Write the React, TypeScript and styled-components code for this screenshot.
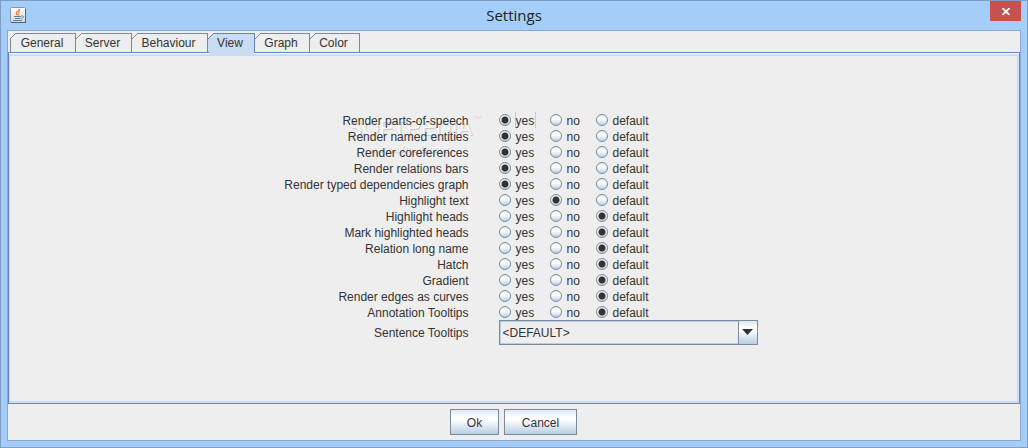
import React, { useState } from "react";
import styled, { createGlobalStyle, css } from "styled-components";

const metal = {
  frame: "#a4cdf9",
  frameLine: "#7f9dc3",
  clientLine: "#8ba9d0",
  panel: "#eeeeee",
  text: "#333333",
  shadow: "#7a8a99",
  focus: "#6382bf",
  selected: "#c8ddf2",
  bevel: "#b8cfe5",
};

const GlobalStyle = createGlobalStyle`
  *, *::before, *::after { box-sizing: border-box; }
  body {
    margin: 0;
    background: ${metal.frame};
    color: ${metal.text};
    font: 12px/16px "Liberation Sans", Arial, sans-serif;
  }
  button, select, input { font: inherit; color: inherit; margin: 0; }
`;

const steel = css`
  background: linear-gradient(#dde8f3 0%, #ffffff 30%, #ffffff 40%, #b8cfe5 100%);
`;

const Window = styled.div`
  min-height: 100vh;
  display: flex;
  flex-direction: column;
  padding: 0 6px 6px;
  border: 1px solid ${metal.frameLine};
  background: ${metal.frame};
`;

const TitleBar = styled.header`
  height: 29px;
  display: grid;
  grid-template-columns: 31px 1fr 31px;
  align-items: start;
`;

const AppIcon = styled.svg`
  width: 16px;
  height: 16px;
  margin: 6px 0 0 3px;
`;

const Title = styled.h1`
  margin: 0;
  text-align: center;
  font: 15px/29px "Open Sans", "Noto Sans", sans-serif;
  color: #1e1e1e;
`;

const CloseButton = styled.button`
  width: 31px;
  height: 20px;
  display: grid;
  place-items: center;
  padding: 0;
  border: 0;
  background: #c75050;
`;

const Client = styled.main`
  flex: 1;
  display: flex;
  flex-direction: column;
  padding-top: 2px;
  border: 1px solid ${metal.clientLine};
  background: ${metal.panel};
`;

const TabList = styled.div`
  display: flex;
  padding-left: 2px;
`;

const Tab = styled.button<{ $active: boolean; $width: number }>`
  position: relative;
  width: ${(p) => p.$width}px;
  height: 19px;
  padding: 0 2px 0 0;
  border: 1px solid ${(p) => (p.$active ? metal.focus : metal.shadow)};
  border-width: 1px 1px 0 0;
  line-height: 18px;
  text-align: center;
  background: ${(p) => (p.$active ? metal.selected : metal.panel)};

  &:first-child {
    border-left-width: 1px;
  }

  &::before {
    content: "";
    position: absolute;
    top: -1px;
    left: 0;
    width: 6px;
    height: 6px;
    background: linear-gradient(
      135deg,
      ${metal.panel} 42%,
      ${(p) => (p.$active ? metal.focus : metal.shadow)} 43%,
      ${(p) => (p.$active ? metal.focus : metal.shadow)} 56%,
      transparent 57%
    );
  }

  &:first-child::before {
    left: -1px;
  }

  ${(p) =>
    p.$active &&
    css`
      &::after {
        content: "";
        position: absolute;
        top: 100%;
        left: 1px;
        right: 0;
        height: 3px;
        background: ${metal.selected};
      }
    `}
`;

const TabPanel = styled.section`
  flex: 1;
  display: flex;
  padding-top: 1px;
  border: 1px solid ${metal.shadow};
  border-top-color: ${metal.focus};
  border-left-color: ${metal.focus};
  background: #ffffff;
`;

const PanelInset = styled.div`
  flex: 1;
  display: flex;
  align-items: center;
  justify-content: center;
  padding-bottom: 1px;
  border: 2px solid ${metal.selected};
  border-left-width: 1px;
  background: ${metal.panel};
`;

const Form = styled.form`
  position: relative;
  isolation: isolate;
  display: grid;
  grid-template-columns: 199px 259px;
  column-gap: 30px;
`;

const Option = styled.div`
  display: contents;
`;

const Caption = styled.span`
  text-align: right;
  line-height: 18px;
  height: 16px;
  white-space: nowrap;
`;

const SelectCaption = styled.label`
  text-align: right;
  line-height: 26px;
  height: 25px;
`;

const Choices = styled.div`
  display: flex;
  height: 16px;
  align-items: center;
`;

const Choice = styled.label`
  display: flex;
  align-items: center;
  gap: 5px;
  line-height: 18px;
  height: 16px;

  &:nth-child(1) { width: 51px; }
  &:nth-child(2) { width: 46px; }
`;

const Radio = styled.input.attrs({ type: "radio" })`
  appearance: none;
  width: 12px;
  height: 12px;
  border: 1px solid ${metal.shadow};
  border-radius: 50%;
  ${steel}
  outline: none;

  &:checked {
    background:
      radial-gradient(circle at center, #333333 0 3px, transparent 4px),
      linear-gradient(#dde8f3 0%, #ffffff 30%, #ffffff 40%, #b8cfe5 100%);
  }
`;

const ChoiceText = styled.span<{ $focused: boolean }>`
  height: 16px;
  padding-right: 1px;
  box-shadow: ${(p) =>
    p.$focused ? `-1px 0 ${metal.bevel}, 1px 0 ${metal.bevel}` : "none"};
`;

const Combo = styled.div`
  display: grid;
  grid-template-columns: 1fr 19px;
  height: 25px;
  border: 1px solid ${metal.shadow};
`;

const ComboSelect = styled.select`
  grid-area: 1 / 1 / 2 / 3;
  min-width: 0;
  appearance: none;
  padding: 1px 20px 0 2px;
  border: 1px solid ${metal.bevel};
  border-radius: 0;
  background: ${metal.panel};
  outline: none;
`;

const ComboArrow = styled.span`
  grid-area: 1 / 2 / 2 / 3;
  z-index: 1;
  display: grid;
  place-items: center;
  border-left: 1px solid ${metal.shadow};
  pointer-events: none;
  ${steel}
`;

const Actions = styled.footer`
  display: flex;
  justify-content: center;
  gap: 5px;
  padding: 5px 6px 5px 5px;
`;

const ActionButton = styled.button<{ $width: number }>`
  width: ${(p) => p.$width}px;
  height: 26px;
  padding: 1px 0 0;
  border: 1px solid ${metal.shadow};
  ${steel}
`;

const Watermark = styled.div`
  position: absolute;
  z-index: -1;
  top: 4px;
  left: 78px;
  color: #f8f8f8;
  text-align: center;
  text-shadow: 1px 1px 1px #c4c4c4;
  pointer-events: none;
`;

const WatermarkName = styled.div`
  font: 22px/24px "Liberation Sans", sans-serif;

  sup {
    position: absolute;
    top: -4px;
    font: 9px/10px "Liberation Sans", sans-serif;
  }
`;

const WatermarkSite = styled.div`
  font: bold 10px/18px "Liberation Serif", serif;
`;

const tabs: [string, number][] = [
  ["General", 66],
  ["Server", 56],
  ["Behaviour", 76],
  ["View", 47],
  ["Graph", 55],
  ["Color", 50],
];
const values = ["yes", "no", "default"];
const initial: [string, string][] = [
  ["Render parts-of-speech", "yes"],
  ["Render named entities", "yes"],
  ["Render coreferences", "yes"],
  ["Render relations bars", "yes"],
  ["Render typed dependencies graph", "yes"],
  ["Highlight text", "no"],
  ["Highlight heads", "default"],
  ["Mark highlighted heads", "default"],
  ["Relation long name", "default"],
  ["Hatch", "default"],
  ["Gradient", "default"],
  ["Render edges as curves", "default"],
  ["Annotation Tooltips", "default"],
];

function JavaIcon() {
  return (
    <AppIcon viewBox="0 0 16 16" aria-hidden="true">
      <defs>
        <linearGradient id="tile" x1="0" y1="0" x2="0" y2="1">
          <stop offset="0" stopColor="#ffffff" />
          <stop offset="1" stopColor="#d3d8dc" />
        </linearGradient>
      </defs>
      <rect x="0.5" y="0.5" width="15" height="15" rx="1" fill="url(#tile)" stroke="#8b98a3" />
      <path d="M1 15.5h14.5V2" fill="none" stroke="#4c6270" />
      <path d="M9.5 2C9.8 4 6 4.500 6.300 6.300C6.500 7.300 7.500 7.500 7.500 8.500" fill="none" stroke="#e8782a" strokeWidth="1.400" />
      <path d="M10 4.500C8 5.300 8 6 8.800 6.800C9.200 7.400 8.800 8 8.300 8.400" fill="none" stroke="#ee9a50" strokeWidth="1.100" />
      <path d="M4 9.500h7M5 11.500h5.500M3 13.500h9" fill="none" stroke="#5a7f9f" strokeWidth="1.200" />
      <path d="M11 9h1.500c1.500 0 1.200 2-1 2.500" fill="none" stroke="#5a7f9f" />
    </AppIcon>
  );
}

export default function App() {
  const [active, setActive] = useState("View");
  const [settings, setSettings] = useState(initial);

  const choose = (name: string, value: string) =>
    setSettings(settings.map(([n, v]) => [n, n === name ? value : v]));

  return (
    <>
      <GlobalStyle />
      <Window>
        <TitleBar>
          <JavaIcon />
          <Title>Settings</Title>
          <CloseButton aria-label="Close">
            <svg width="8" height="7" viewBox="0 0 8 7" aria-hidden="true">
              <path d="M0.500 0L7.500 7M7.500 0L0.500 7" stroke="#ffffff" strokeWidth="1.800" />
            </svg>
          </CloseButton>
        </TitleBar>
        <Client>
          <TabList role="tablist">
            {tabs.map(([name, width]) => (
              <Tab
                key={name}
                role="tab"
                aria-selected={name === active}
                $active={name === active}
                $width={width}
                onClick={() => setActive(name)}
              >
                {name}
              </Tab>
            ))}
          </TabList>
          <TabPanel role="tabpanel">
            <PanelInset>
              <Form>
                {settings.map(([name, value], row) => (
                  <Option key={name} role="radiogroup" aria-label={name}>
                    <Caption>{name}</Caption>
                    <Choices>
                      {values.map((v) => (
                        <Choice key={v}>
                          <Radio
                            name={name}
                            value={v}
                            checked={v === value}
                            onChange={() => choose(name, v)}
                          />
                          <ChoiceText $focused={row === 0 && v === "yes"}>{v}</ChoiceText>
                        </Choice>
                      ))}
                    </Choices>
                  </Option>
                ))}
                <SelectCaption htmlFor="tooltips">Sentence Tooltips</SelectCaption>
                <Combo>
                  <ComboSelect id="tooltips">
                    <option>&lt;DEFAULT&gt;</option>
                  </ComboSelect>
                  <ComboArrow>
                    <svg width="11" height="6" viewBox="0 0 11 6" aria-hidden="true">
                      <path d="M0 0h11L5.500 6z" fill="#333333" />
                    </svg>
                  </ComboArrow>
                </Combo>
                <Watermark aria-hidden="true">
                  <WatermarkName>
                    SOFTPEDIA<sup>™</sup>
                  </WatermarkName>
                  <WatermarkSite>www.softpedia.com</WatermarkSite>
                </Watermark>
              </Form>
            </PanelInset>
          </TabPanel>
          <Actions>
            <ActionButton $width={49}>Ok</ActionButton>
            <ActionButton $width={73}>Cancel</ActionButton>
          </Actions>
        </Client>
      </Window>
    </>
  );
}
